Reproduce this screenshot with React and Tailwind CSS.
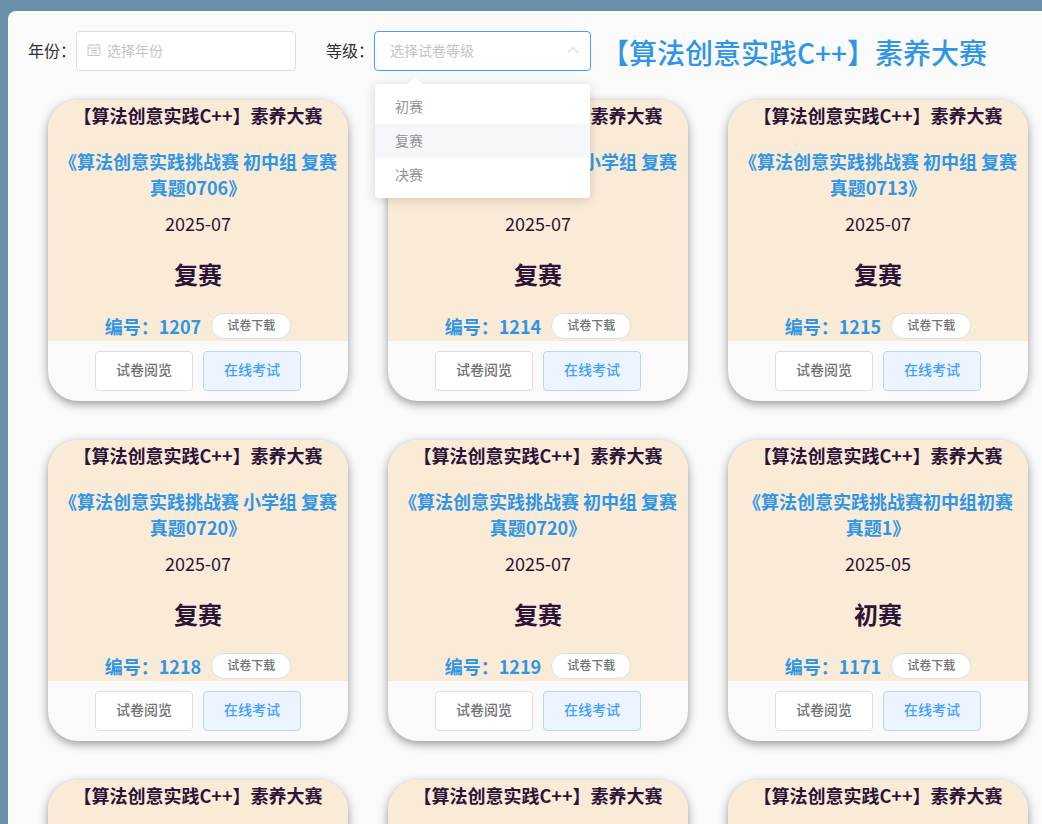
const papers = [
  { name: "《算法创意实践挑战赛 初中组 复赛真题0706》", date: "2025-07", level: "复赛", no: 1207 },
  { name: "《算法创意实践挑战赛 小学组 复赛真题0713》", date: "2025-07", level: "复赛", no: 1214 },
  { name: "《算法创意实践挑战赛 初中组 复赛真题0713》", date: "2025-07", level: "复赛", no: 1215 },
  { name: "《算法创意实践挑战赛 小学组 复赛真题0720》", date: "2025-07", level: "复赛", no: 1218 },
  { name: "《算法创意实践挑战赛 初中组 复赛真题0720》", date: "2025-07", level: "复赛", no: 1219 },
  { name: "《算法创意实践挑战赛初中组初赛真题1》", date: "2025-05", level: "初赛", no: 1171 },
  { name: "《算法创意实践挑战赛 小学组 初赛真题1》", date: "2025-05", level: "初赛", no: 1172 },
  { name: "《算法创意实践挑战赛 初中组 初赛真题2》", date: "2025-05", level: "初赛", no: 1173 },
  { name: "《算法创意实践挑战赛 小学组 初赛真题2》", date: "2025-05", level: "初赛", no: 1174 },
];

function PaperCard({ paper }) {
  return (
    <div className="w-[300px] h-[301px] rounded-[30px] overflow-hidden bg-[#fafafa] shadow-[0_3px_10px_rgba(0,0,0,0.4)] flex flex-col">
      <div className="h-[241px] bg-[#faebd7] flex flex-col items-center">
        <div className="h-[30px] leading-[30px] text-[18px] font-semibold text-[#2c1338] text-center">
          【算法创意实践C++】素养大赛
        </div>
        <div className="mt-[18px] w-[280px] text-center text-[18px] leading-[26px] font-bold text-[#2f95e6]">
          {paper.name}
        </div>
        <div className="mt-[8px] h-[30px] leading-[30px] text-[18px] text-[#2c1338]">{paper.date}</div>
        <div className="mt-[18px] h-[36px] leading-[36px] text-[24px] font-semibold text-[#2c1338]">{paper.level}</div>
        <div className="mt-[20px] flex items-start gap-[10px]">
          <span className="text-[18px] leading-[28px] font-bold text-[#2f95e6]">编号：{paper.no}</span>
          <span className="w-[80px] h-[26px] mt-[1px] rounded-full bg-white border border-[#dcdfe6] text-[12px] leading-[22px] font-medium text-center text-[#707275]">
            试卷下载
          </span>
        </div>
      </div>
      <div className="flex justify-center gap-[10px] pt-[10px]">
        <button className="w-[98px] h-[40px] pb-[4px] rounded-[4px] bg-white border border-[#dcdfe6] text-[14px] font-medium text-[#707275]">
          试卷阅览
        </button>
        <button className="w-[98px] h-[40px] pb-[4px] rounded-[4px] bg-[#ecf5ff] border border-[#b3d8ff] text-[14px] font-medium text-[#409eff]">
          在线考试
        </button>
      </div>
    </div>
  );
}

export default function App() {
  return (
    <div className="h-screen overflow-hidden bg-[#6b90ab] pl-[8px] pt-[11px] font-['Noto_Sans_CJK_SC','Noto_Sans',sans-serif]">
      <div className="h-[900px] rounded-tl-[8px] bg-[#fafafa]">
        {/* filters */}
        <div className="relative flex items-center pt-[20px] pl-[20px]">
          <span className="w-[48px] pb-[2px] text-[16px] text-[#303133] whitespace-nowrap">年份：</span>
          <div className="w-[220px] h-[40px] pb-[2px] rounded-[4px] bg-white border border-[#dcdfe6] flex items-center pl-[10px] text-[14px] text-[#c0c4cc]">
            <svg width="14" height="14" viewBox="0 0 14 14" fill="none" stroke="#c0c4cc" strokeWidth="1" className="mr-[6px]">
              <rect x="1" y="2" width="12" height="10.5" rx="0.5" />
              <path d="M1 5h12M4 1v2M10 1v2M4 7.5h6M4 10h6" />
            </svg>
            选择年份
          </div>
          <span className="ml-[30px] w-[48px] pb-[2px] text-[16px] text-[#303133] whitespace-nowrap">等级：</span>
          <div className="w-[217px] h-[40px] pb-[2px] rounded-[4px] bg-white border border-[#409eff] flex items-center justify-between pl-[15px] pr-[10px] text-[14px] text-[#c0c4cc]">
            选择试卷等级
            <svg width="14" height="14" viewBox="0 0 14 14" fill="none" stroke="#c0c4cc" strokeWidth="1">
              <path d="M2 9.5 7 4.5l5 5" />
            </svg>
          </div>
          <h1 className="ml-[10px] h-[40px] leading-[42px] text-[28px] font-medium text-[#2f95e6] whitespace-nowrap">【算法创意实践C++】素养大赛</h1>

          {/* select dropdown */}
          <div className="absolute z-10 left-[367px] top-[73px] w-[215px] h-[114px] rounded-[4px] bg-white py-[6px] shadow-[0_2px_12px_rgba(0,0,0,0.15)] text-[14px] text-[#909399]">
            <div className="absolute left-[35px] -top-[5px] w-[10px] h-[10px] rotate-45 bg-white" />
            <div className="relative h-[34px] leading-[33px] px-[20px]">初赛</div>
            <div className="relative h-[34px] leading-[33px] px-[20px] bg-[#f5f7fa]">复赛</div>
            <div className="relative h-[34px] leading-[33px] px-[20px]">决赛</div>
          </div>
        </div>

        {/* cards */}
        <div className="grid grid-cols-[300px_300px_300px] gap-x-[40px] gap-y-[39px] pl-[40px] pt-[29px]">
          {papers.map((paper) => (
            <PaperCard key={paper.no} paper={paper} />
          ))}
        </div>
      </div>
    </div>
  );
}
